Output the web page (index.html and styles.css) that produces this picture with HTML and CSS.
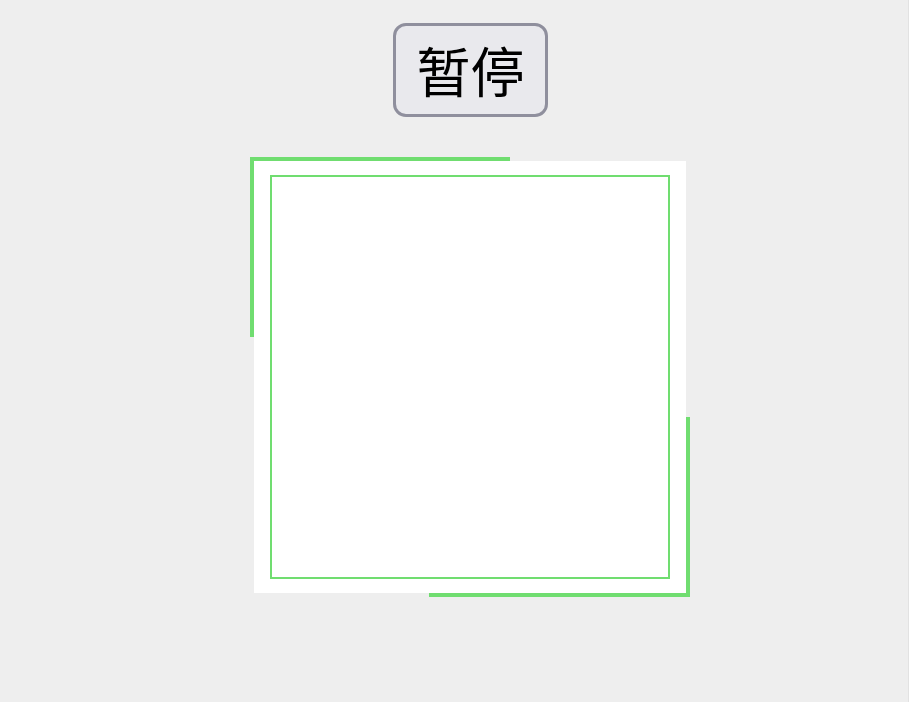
FILE: index.html
```html
<!DOCTYPE html>
<html>
<head>
<meta charset="utf-8">
<link rel="stylesheet" href="styles.css">
</head>
<body>
<div class="page">
  <button class="btn">暂停</button>
  <div class="box">
    <div class="inner"></div>
  </div>
</div>
</body>
</html>
```
FILE: styles.css
```css
html, body {
  margin: 0;
  padding: 0;
  background: #eeeeee;
}
body {
  width: 909px;
  height: 702px;
  overflow: hidden;
  box-sizing: border-box;
  border-right: 1px solid #e2e2e2;
}
.page {
  display: flex;
  flex-direction: column;
  align-items: center;
  padding-top: 23px;
  padding-left: 32px;
}
.btn {
  width: 155px;
  height: 94px;
  box-sizing: border-box;
  border: 3px solid #8f8f9d;
  border-radius: 13px;
  background: #e9e9ed;
  color: #000;
  font-family: "Noto Sans CJK SC", "Noto Sans", sans-serif;
  font-size: 54px;
  line-height: 1;
  padding: 0;
  margin: 0 0 0 1px;
}
.box {
  position: relative;
  margin-top: 44px;
  width: 432px;
  height: 432px;
  background: #ffffff;
  padding: 14px 16px;
  box-sizing: border-box;
}
.box::before {
  content: "";
  position: absolute;
  left: -4px;
  top: -4px;
  width: 260px;
  height: 180px;
  border-top: 4px solid #70dd70;
  border-left: 4px solid #70dd70;
  box-sizing: border-box;
}
.box::after {
  content: "";
  position: absolute;
  right: -4px;
  bottom: -4px;
  width: 261px;
  height: 180px;
  border-bottom: 4px solid #70dd70;
  border-right: 4px solid #70dd70;
  box-sizing: border-box;
}
.inner {
  width: 100%;
  height: 100%;
  box-sizing: border-box;
  border: 2px solid #70dd70;
}
```
